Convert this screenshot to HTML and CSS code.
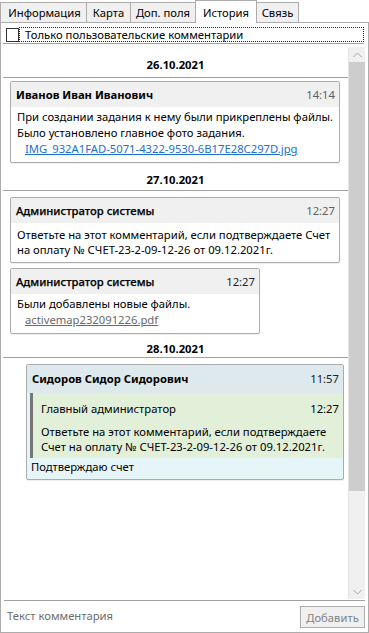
FILE: index.html
```html
<!DOCTYPE html>
<html lang="ru">
<head>
<meta charset="utf-8">
<link rel="stylesheet" href="styles.css">
</head>
<body>
<div class="tabs">
  <div class="tab t1">Информация</div>
  <div class="tab t2">Карта</div>
  <div class="tab t3">Доп. поля</div>
  <div class="tab t4 active">История</div>
  <div class="tab t5">Связь</div>
</div>
<div class="panel">
  <div class="filter">
    <span class="box"></span>
    <span class="focus">Только пользовательские комментарии</span>
  </div>
  <div class="sep"></div>
  <div class="viewport">
    <div class="feed">
      <div class="date d1">26.10.2021</div>
      <div class="card c1">
        <div class="head"><span class="name">Иванов Иван Иванович</span><span class="time">14:14</span></div>
        <div class="body">
          <div class="ln">При создании задания к нему были прикреплены файлы.</div>
          <div class="ln">Было установлено главное фото задания.</div>
          <a class="ln link">IMG_932A1FAD-5071-4322-9530-6B17E28C297D.jpg</a>
        </div>
      </div>
      <div class="date d2">27.10.2021</div>
      <div class="card c2">
        <div class="head"><span class="name semi">Администратор системы</span><span class="time">12:27</span></div>
        <div class="body wrap">Ответьте на этот комментарий, если подтверждаете Счет<br>на оплату № СЧЕТ-23-2-09-12-26 от 09.12.2021г.</div>
      </div>
      <div class="card c3">
        <div class="head"><span class="name semi">Администратор системы</span><span class="time dark">12:27</span></div>
        <div class="body">
          <div class="ln">Были добавлены новые файлы.</div>
          <a class="ln link grey">activemap232091226.pdf</a>
        </div>
      </div>
      <div class="date d3">28.10.2021</div>
      <div class="card c4">
        <div class="head"><span class="name">Сидоров Сидор Сидорович</span><span class="time dark">11:57</span></div>
        <div class="quote">
          <div class="qhead"><span>Главный администратор</span><span>12:27</span></div>
          <div class="qtext">Ответьте на этот комментарий, если подтверждаете<br>Счет на оплату № СЧЕТ-23-2-09-12-26 от 09.12.2021г.</div>
        </div>
        <div class="reply">Подтверждаю счет</div>
      </div>
    </div>
    <div class="scrollbar">
      <div class="arrow up"><svg width="9" height="6" viewBox="0 0 9 6"><path d="M0.5 5 L4.5 1 L8.5 5" fill="none" stroke="#a3a3a3" stroke-width="1"/></svg></div>
      <div class="thumb"></div>
      <div class="track"></div>
      <div class="arrow down"><svg width="9" height="6" viewBox="0 0 9 6"><path d="M0.5 1 L4.5 5 L8.5 1" fill="none" stroke="#a3a3a3" stroke-width="1"/></svg></div>
    </div>
  </div>
  <div class="composer">
    <span class="placeholder">Текст комментария</span>
    <button class="add" disabled>Добавить</button>
  </div>
</div>
</body>
</html>
```

FILE: styles.css
```css
* { box-sizing: border-box; }
html, body { margin: 0; padding: 0; background: #fff; }
body {
  width: 369px;
  height: 633px;
  font-family: "Noto Sans", "Segoe UI", sans-serif;
  font-size: 11.25px;
  color: #000;
  overflow: hidden;
}
.tabs {
  display: flex;
  height: 22px;
  align-items: flex-end;
  position: relative;
  z-index: 2;
}
.tab {
  height: 20px;
  line-height: 20px;
  text-align: center;
  background: #f0f0f0;
  border: 1px solid #acacac;
  border-bottom: none;
  margin-left: -1px;
  white-space: nowrap;
}
.t1 { width: 87px; margin-left: 0; padding-left: 2px; }
.t2 { width: 45px; }
.t3 { width: 66px; }
.t4 { width: 62px; }
.t5 { width: 43px; }
.tab.active {
  height: 23px;
  line-height: 24px;
  margin-bottom: -1px;
  background: #fff;
  position: relative;
  z-index: 2;
}
.panel {
  height: 611px;
  border: 1px solid #acacac;
  display: flex;
  flex-direction: column;
  position: relative;
  z-index: 1;
}
.filter {
  display: flex;
  align-items: center;
  height: 15px;
  margin: 4px 4px 0 5px;
}
.box {
  width: 13px;
  height: 14px;
  border: 1px solid #333;
  background: #fff;
  flex: none;
}
.focus {
  flex: 1;
  height: 15px;
  line-height: 13px;
  border: 1px dotted #222;
  padding-left: 5px;
  white-space: nowrap;
}
.sep {
  height: 1px;
  background: #a0a0a0;
  margin: 1px 4px 0 2px;
}
.viewport {
  flex: 1;
  display: flex;
  min-height: 0;
}
.feed {
  flex: 1;
  margin-left: 2px;
  overflow: hidden;
}
.date {
  text-align: center;
  font-weight: bold;
  line-height: 16px;
  border-bottom: 1px solid #a0a0a0;
}
.d1 { margin-top: 13px; padding-bottom: 4px; }
.d2 { margin-top: 9px; padding-bottom: 2px; }
.d3 { margin-top: 7px; padding-bottom: 0; }
.card {
  border: 1px solid #acacac;
  border-radius: 2px;
  background: #fff;
  box-shadow: 0 1px 1px rgba(0,0,0,0.07);
  white-space: nowrap;
}
.c1 { margin: 3px 8px 0 7px; }
.c2 { margin: 6px 8px 0 7px; }
.c3 { margin: 5px 88px 0 7px; }
.c4 { margin: 6px 4px 0 23px; background: #e6f5f7; }
.head {
  display: flex;
  justify-content: space-between;
  background: #f0f0f0;
  height: 25px;
  line-height: 25px;
  padding: 0 4px 0 5px;
}
.name { font-weight: bold; }
.name.semi {
  font-weight: 500;
  color: #000;
  -webkit-text-stroke: 0.25px #000;
}
.time { color: #606060; }
.time.dark { color: #222; }
.body {
  padding: 2px 6px 5px 6px;
}
.ln { display: block; line-height: 16px; }
.wrap { line-height: 15px; padding-top: 4px; }
.link {
  padding-left: 8px;
  color: #1c6fd0;
  text-decoration: underline;
}
.link.grey { color: #6a6a6a; }
.c4 .head {
  background: #dde9ec;
  height: 28px;
  line-height: 28px;
  padding: 0 4px 0 5px;
}
.quote {
  background: #e2f0da;
  margin-left: 3px;
  border-left: 3px solid #767676;
  padding: 8px 4px 4px 8px;
}
.qhead {
  display: flex;
  justify-content: space-between;
  line-height: 16px;
}
.qtext { line-height: 15px; margin-top: 7px; }
.reply { padding: 1px 4px 4px 4px; line-height: 16px; }
.scrollbar {
  width: 17px;
  margin: 3px 3px 1px 0;
  display: flex;
  flex-direction: column;
  border-left: 1px solid #e3e3e3;
  background: #f0f0f0;
}
.arrow {
  height: 15px;
  display: flex;
  align-items: center;
  justify-content: center;
}
.thumb {
  height: 429px;
  background: #cdcdcd;
}
.track { flex: 1; }
.composer {
  height: 32px;
  margin: 0 3px 0 3px;
  border-top: 1px solid #a0a0a0;
  display: flex;
  align-items: flex-start;
  justify-content: space-between;
  padding: 5px 0 0 3px;
}
.placeholder { color: #6d6d6d; line-height: 20px; }
.add {
  width: 65px;
  height: 22px;
  border: 1px solid #adadad;
  background: #f0f0f0;
  color: #838383;
  font-family: inherit;
  font-size: 11.25px;
  padding: 0;
}
```
